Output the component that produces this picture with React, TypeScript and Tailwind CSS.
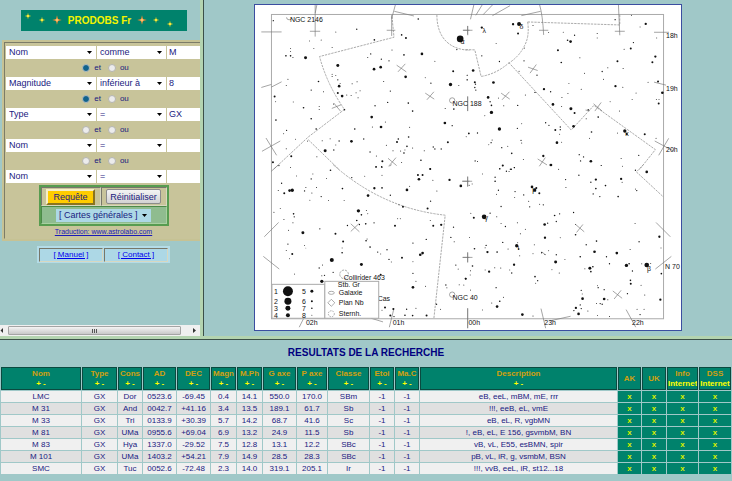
import type { ReactNode } from 'react';

type Star = [x: number, y: number, r: number];

interface Sheet {
  id: string;
  origin: string;
  stars: Star[];
  // solid tick marks and grid crosses
  marks: string;
  // dashed constellation borders
  borders: string;
}

// The sky map is plotted as four sheets, each at three units per pixel.
const sheets: Sheet[] = [
  {
    id: 'nw',
    origin: 'translate(-5 -5) scale(0.3333)',
    stars: [
      [70, 62, 2], [258, 96, 1.5], [321, 88, 2], [506, 57, 2.5], [456, 105, 2.5], [469, 114, 3], [179, 123, 1.5],
      [214, 120, 1.5], [374, 120, 2.5], [122, 146, 1.5], [122, 155, 1.5], [108, 168, 2.5], [122, 168, 2.5], [129, 173, 1.5],
      [167, 174, 4.5], [192, 146, 1.5], [247, 143, 1.5], [427, 150, 1.5], [363, 162, 2], [354, 173, 1.5], [395, 178, 2],
      [418, 183, 2], [463, 165, 2.5], [517, 162, 4], [556, 184, 1.5], [264, 197, 4.5], [393, 202, 4], [373, 208, 4],
      [611, 214, 3], [468, 231, 4], [527, 234, 1.5], [544, 250, 2], [603, 254, 5], [628, 257, 1.5], [653, 240, 2],
      [653, 226, 1.5], [247, 223, 1.5], [247, 230, 1.5], [258, 227, 1.5], [264, 240, 2], [271, 251, 1.5], [268, 259, 4],
      [206, 245, 2.5], [114, 238, 1.5], [109, 257, 1.5], [184, 271, 2], [221, 276, 1.5], [264, 280, 3], [277, 289, 4],
      [291, 286, 1.5], [304, 287, 1.5], [319, 279, 1.5], [325, 294, 1.5], [331, 273, 1.5], [322, 246, 1.5], [307, 252, 1.5],
      [402, 245, 1.5], [422, 274, 2], [74, 290, 3], [77, 306, 1.5], [130, 307, 1.5], [161, 324, 2.5], [208, 320, 1.5],
      [208, 329, 1.5], [251, 313, 1.5], [284, 330, 2.5], [414, 308, 2], [376, 318, 2], [476, 310, 2.5], [489, 334, 2.5],
      [587, 326, 1.5], [613, 328, 2.5], [78, 361, 2.5], [184, 357, 2.5], [366, 352, 4], [394, 382, 4], [368, 382, 1.5],
      [407, 367, 1.5], [480, 383, 1.5], [586, 370, 4], [608, 378, 2], [110, 392, 2], [101, 402, 1.5], [199, 388, 2.5],
      [315, 388, 2.5], [477, 412, 2.5], [658, 401, 2.5], [137, 419, 1.5], [217, 423, 1.5], [241, 417, 1.5], [268, 424, 2],
      [305, 425, 4], [342, 418, 2], [258, 436, 1.5], [226, 453, 4.5], [252, 451, 2], [201, 471, 1.5], [124, 470, 3],
      [109, 447, 1.5], [173, 424, 1.5], [446, 418, 2.5], [442, 427, 3], [410, 437, 1.5], [430, 453, 1.5], [453, 454, 1.5],
      [463, 460, 2.5], [472, 440, 2.5], [489, 445, 1.5], [466, 451, 1.5], [551, 442, 2], [556, 448, 2], [575, 448, 2],
      [595, 428, 3], [524, 453, 1.5], [514, 482, 2.5], [542, 508, 3], [361, 457, 2], [380, 469, 1.5], [398, 485, 3],
      [456, 489, 1.5], [379, 502, 2.5], [396, 502, 2.5], [69, 488, 3], [122, 504, 1.5], [632, 117, 10], [622, 149, 2],
    ],
    marks:
      'M34 96H95M64 262L95 246M34 263L64 254M196 15V110M180 94H211M426 45V108M411 91H437M437 15L426 56M434 34L493 48M441 196L470 216M467 192L445 216M527 280L554 298M553 276L532 300M252 310L272 334M246 326L274 315M36 455L91 424M48 415L80 467M415 476L441 498M439 474L417 500M655 78V106M640 91H660M655 290V334M196 40L201 15M600 302A8 8 0 1 0 616 302A8 8 0 1 0 600 302M110 52A8 7 0 0 0 126 53',
    borders: 'M427 50L433 112L209 170Q232 255 284 329L175 412L70 510M175 420L268 510M562 45C562 110 597 149 660 151',
  },
  {
    id: 'ne',
    origin: 'translate(210 -5) scale(0.3333)',
    stars: [
      [146, 73, 3.5], [164, 72, 6], [161, 101, 3], [52, 83, 3.5], [206, 77, 1.5], [453, 59, 2], [502, 46, 1.5],
      [545, 72, 3.5], [528, 81, 1.5], [399, 101, 1.5], [399, 114, 1.5], [331, 106, 2], [297, 97, 1.5], [310, 121, 2.5],
      [319, 125, 4], [253, 98, 1.5], [95, 131, 1.5], [281, 151, 3], [180, 144, 1.5], [480, 148, 1.5], [500, 146, 3],
      [508, 128, 2], [578, 114, 1.5], [574, 170, 3.5], [565, 187, 3], [460, 184, 3], [347, 174, 1.5], [291, 188, 2.5],
      [179, 183, 2], [52, 168, 2], [105, 185, 2], [26, 212, 4], [8, 226, 1.5], [8, 240, 1.5], [31, 247, 3],
      [33, 253, 2], [31, 263, 2], [34, 271, 2], [87, 248, 4], [218, 226, 2], [361, 220, 1.5], [431, 204, 1.5],
      [414, 215, 2], [418, 238, 1.5], [477, 206, 1.5], [314, 251, 1.5], [351, 268, 1.5], [454, 259, 3.5], [476, 262, 1.5],
      [516, 280, 1.5], [552, 247, 1.5], [582, 245, 3], [595, 279, 4], [577, 299, 1.5], [585, 299, 1.5], [584, 311, 3],
      [504, 299, 1.5], [239, 268, 3.5], [259, 276, 2], [212, 278, 2], [183, 286, 1.5], [102, 295, 1.5], [71, 293, 4],
      [77, 306, 2], [81, 317, 2.5], [118, 318, 1.5], [160, 317, 2], [266, 314, 4], [293, 293, 1.5], [311, 281, 1.5],
      [292, 320, 1.5], [320, 327, 4.5], [331, 340, 3], [372, 330, 2], [438, 306, 1.5], [402, 352, 2.5], [466, 334, 1.5],
      [81, 338, 5], [61, 348, 1.5], [105, 388, 5], [159, 386, 2], [172, 372, 1.5], [244, 369, 2], [254, 377, 2],
      [273, 391, 3], [288, 382, 2], [288, 390, 2], [286, 404, 1.5], [328, 380, 4], [366, 357, 1.5], [382, 397, 2.5],
      [482, 394, 5], [488, 403, 3], [460, 400, 1.5], [542, 404, 3], [576, 416, 1.5], [5, 411, 1.5], [13, 402, 2],
      [39, 400, 2], [83, 421, 1.5], [80, 429, 2], [73, 435, 1.5], [112, 444, 2], [130, 440, 1.5], [170, 422, 2],
      [172, 430, 1.5], [278, 429, 4], [292, 428, 1.5], [376, 416, 1.5], [142, 461, 2.5], [177, 480, 1.5], [237, 469, 3.5],
      [259, 496, 3], [345, 465, 2], [358, 472, 2], [349, 484, 2], [380, 485, 4], [411, 498, 1.5], [475, 500, 1.5],
      [524, 467, 2], [32, 484, 2], [39, 486, 1.5], [115, 498, 2], [106, 507, 2], [138, 509, 2], [150, 504, 2],
      [164, 214, 1.5], [471, 477, 1.5],
    ],
    marks:
      'M18 58L28 15M34 46L53 15M56 44L84 15M84 47L137 17M171 47L229 34M226 15Q235 45 238 105M224 91H252M463 15L467 106M452 94H482M9 78V104M-4 91H24M191 202L220 212M216 194L197 220M110 280L136 298M135 276L113 300M388 312L414 334M411 308L392 334M572 424L628 454M614 416L584 467M570 247L606 256M570 97H615M220 478L248 496M243 474L225 500M364 331L377 333M9 290V334',
    borders:
      'M190 66L467 75V44M190 66Q196 110 180 138Q165 170 130 192Q95 222 50 230L31 150L0 149M133 188L321 391L389 317L574 450L526 510',
  },
  {
    id: 'sw',
    origin: 'translate(-5 160) scale(0.3333)',
    stars: [
      [87, 3, 2], [379, 7, 2], [397, 8, 1.5], [140, 34, 1.5], [189, 28, 1.5], [184, 43, 2], [230, 42, 1.5], [242, 17, 2.5],
      [306, 39, 2], [345, 35, 1.5], [397, 32, 1.5], [505, 31, 3], [519, 31, 3], [508, 44, 4], [542, 13, 2.5],
      [600, 46, 3.5], [634, 64, 4], [550, 47, 1.5], [562, 79, 1.5], [95, 56, 2], [85, 78, 1.5], [103, 86, 3],
      [119, 78, 4], [127, 77, 5], [168, 69, 1.5], [200, 69, 1.5], [164, 79, 2], [186, 85, 1.5], [214, 96, 2],
      [278, 72, 2.5], [374, 71, 3.5], [397, 70, 2.5], [355, 93, 4], [472, 76, 4], [480, 65, 1.5], [422, 92, 2],
      [180, 107, 1.5], [283, 108, 1.5], [236, 108, 1.5], [448, 121, 1.5], [460, 127, 3], [534, 132, 3], [543, 110, 2],
      [72, 143, 1.5], [91, 132, 1.5], [131, 148, 2.5], [133, 157, 2], [102, 165, 1.5], [326, 139, 5], [335, 151, 2.5],
      [354, 148, 1.5], [350, 138, 1.5], [321, 168, 2.5], [444, 163, 1.5], [452, 163, 1.5], [436, 184, 3], [542, 168, 1.5],
      [551, 184, 3], [575, 181, 3.5], [612, 188, 2], [129, 175, 1.5], [210, 193, 2], [159, 205, 4.5], [116, 197, 1.5],
      [257, 208, 3], [293, 183, 2], [329, 180, 2], [348, 178, 2.5], [373, 175, 2], [280, 231, 3], [352, 224, 1.5],
      [349, 229, 2.5], [361, 248, 2.5], [412, 256, 2], [384, 263, 2], [393, 269, 1.5], [418, 285, 2], [425, 293, 1.5],
      [490, 236, 2], [530, 225, 2], [604, 219, 2], [614, 232, 1.5], [114, 239, 2], [109, 258, 1.5], [127, 269, 3],
      [119, 283, 1.5], [164, 243, 1.5], [168, 251, 1], [277, 251, 1.5], [277, 265, 2.5], [246, 287, 6], [335, 300, 4.5],
      [457, 280, 3], [519, 266, 4], [512, 271, 4], [490, 292, 1.5], [218, 302, 1.5], [208, 311, 2], [134, 329, 1.5],
      [216, 334, 1.5], [224, 333, 2], [216, 351, 5], [250, 324, 2], [333, 331, 1.5], [393, 331, 3], [490, 327, 2],
      [499, 351, 1.5], [490, 369, 4], [528, 366, 1.5], [589, 362, 2], [592, 370, 1.5], [619, 302, 2], [626, 314, 1.5],
      [648, 343, 2.5], [629, 361, 1.5], [643, 362, 1.5], [561, 420, 2], [573, 435, 1.5], [406, 430, 3], [397, 438, 1.5],
      [431, 434, 3], [422, 454, 3], [433, 457, 2], [466, 453, 2.5], [489, 454, 2.5], [531, 454, 3], [471, 435, 2],
      [499, 432, 1.5],
    ],
    marks:
      'M43 217L86 174M40 276L88 314M64 20L86 0M303 178L329 202M327 178L303 201M655 36V66M638 50H660M655 264V294M640 279H660M148 489L161 463M364 462L400 473M419 489L433 432M655 432V492M600 391A8 8 0 1 0 616 391A8 8 0 1 0 600 391M420 5L426 0',
    borders: 'M250 0Q398 132 587 152L553 462M270 330A13 13 0 1 0 296 330A13 13 0 1 0 270 330',
  },
  {
    id: 'se',
    origin: 'translate(210 160) scale(0.3333)',
    stars: [
      [106, 13, 2], [115, 3, 3], [126, 20, 2], [134, 21, 1.5], [141, 14, 2], [150, 9, 2], [260, 1, 4], [283, 14, 1.5],
      [304, 45, 2], [305, 69, 1.5], [344, 32, 2], [411, 3, 1.5], [514, 17, 2], [548, 22, 4], [471, 43, 3.5], [474, 53, 1.5],
      [395, 45, 3.5], [380, 53, 2], [424, 63, 2.5], [395, 72, 2.5], [387, 88, 2], [407, 96, 2], [462, 96, 2.5],
      [514, 73, 1.5], [518, 78, 2], [92, 38, 2], [92, 50, 2.5], [54, 28, 1.5], [14, 62, 1.5], [23, 58, 1.5],
      [102, 77, 2], [96, 89, 1.5], [152, 81, 2], [151, 99, 1.5], [178, 91, 2], [203, 67, 4], [211, 76, 5], [216, 70, 3],
      [225, 86, 3], [193, 110, 1.5], [196, 127, 2], [226, 119, 1.5], [237, 121, 2], [110, 126, 2], [77, 146, 2],
      [19, 146, 1.5], [28, 160, 3], [59, 157, 7], [97, 157, 1.5], [110, 177, 1.5], [123, 186, 2], [159, 175, 1.5],
      [183, 194, 1.5], [168, 208, 1.5], [241, 180, 4], [250, 176, 2], [271, 153, 2.5], [286, 148, 2], [276, 171, 2],
      [328, 144, 2], [334, 180, 1.5], [513, 177, 1.5], [586, 217, 3.5], [525, 232, 2], [334, 211, 2.5], [242, 220, 3.5],
      [288, 220, 1.5], [366, 241, 2], [397, 230, 2.5], [391, 262, 4], [458, 266, 4], [498, 255, 1.5], [591, 251, 1.5],
      [15, 219, 1.5], [30, 253, 2.5], [65, 243, 2], [62, 250, 1.5], [69, 263, 3.5], [98, 263, 2.5], [115, 234, 2],
      [131, 254, 1.5], [157, 244, 5], [163, 254, 2.5], [160, 235, 1.5], [166, 274, 1.5], [210, 241, 1.5], [206, 268, 1.5],
      [232, 265, 2], [242, 270, 1.5], [253, 259, 1.5], [276, 271, 2], [274, 293, 4.5], [263, 316, 1.5], [285, 326, 1.5],
      [302, 285, 1.5], [348, 277, 2.5], [362, 313, 1.5], [377, 312, 4.5], [386, 307, 2.5], [380, 322, 2.5], [427, 277, 2],
      [436, 298, 2], [487, 303, 5], [495, 298, 2.5], [533, 298, 1.5], [548, 302, 7], [560, 297, 1.5], [505, 320, 2],
      [592, 328, 2.5], [149, 301, 3.5], [142, 326, 2], [136, 317, 1.5], [91, 310, 1.5], [109, 311, 1.5], [74, 322, 3.5],
      [62, 317, 1.5], [24, 305, 2.5], [18, 319, 1.5], [17, 332, 1.5], [4, 343, 3], [212, 337, 2.5], [220, 349, 2],
      [214, 357, 1.5], [95, 370, 2], [18, 377, 1.5], [117, 399, 1.5], [106, 411, 2.5], [82, 416, 1.5], [98, 427, 4],
      [54, 437, 1.5], [174, 451, 4], [206, 455, 1.5], [351, 378, 2], [354, 389, 1.5], [355, 403, 4], [348, 422, 2],
      [335, 431, 3.5], [351, 433, 2], [329, 439, 2], [343, 449, 4], [371, 440, 1.5], [400, 454, 1.5], [436, 457, 1.5],
      [400, 364, 1.5], [402, 370, 2], [420, 376, 2], [420, 404, 4], [431, 406, 1.5], [397, 418, 1.5], [408, 418, 2],
      [414, 420, 2], [499, 348, 2.5], [500, 358, 3], [531, 363, 1.5], [490, 388, 2], [542, 392, 1.5], [589, 406, 3.5],
      [519, 435, 1.5], [540, 435, 1.5], [528, 451, 2],
    ],
    marks:
      'M9 36V66M-6 50H23M9 264V294M-6 279H24M334 180L360 202M356 180L337 204M446 380L474 402M471 378L450 404M576 174L619 217M574 314L622 276M9 432V492M230 433L244 492M486 436L515 489M256 470L319 456M232 262L243 271',
    borders: 'M538 0L517 22L598 97',
  },
];

const chartLabels: [x: number, y: number, text: string][] = [
  [35, 17, 'NGC 2146'], [198, 101, 'NGC 188'], [198, 296, 'NGC 40'], [89, 276, 'Collinder 463'], [123, 297, 'Cas'],
  [412, 33, '18h'], [412, 86, '19h'], [412, 147, '20h'], [411, 265, 'N 70'],
  [51, 321, '02h'], [138, 321, '01h'], [214, 321, '00h'], [290, 321, '23h'], [378, 321, '22h'],
  [206, 39, 'α'], [265, 24, 'δ'], [228, 28, 'λ'], [371, 131, 'κ'], [230, 216, 'γ'], [278, 187, 'μ'], [393, 267, 'β'], [263, 246, 'ι'],
];

const magnitudes: [cx: number, cy: number, r: number, label: string, tx: number][] = [
  [33, 287, 5, '1', 19], [33, 297, 3.5, '2', 19], [33, 304, 2.5, '3', 19], [33, 311, 2, '4', 19],
  [57, 287, 1.5, '5', 47], [57, 297, 1, '6', 47], [57, 304, 0.8, '7', 47], [57, 311, 0.5, '8', 47],
];

function StarChart() {
  return (
    <svg viewBox="0 0 427 326" className="block w-full max-w-[428px] border border-[#3b4ea0] bg-white" role="img" aria-label="Carte du ciel">
      <rect x="16.5" y="9.5" width="393" height="305" fill="none" stroke="#aaa" />
      {sheets.map((sheet) => (
        <g key={sheet.id} transform={sheet.origin}>
          <path d={sheet.borders} fill="none" stroke="#999" strokeWidth="2.5" strokeDasharray="7 3" />
          <path d={sheet.marks} fill="none" stroke="#777" strokeWidth="2" />
          {sheet.stars.map(([x, y, r], i) => (
            <circle key={i} cx={x} cy={y} r={r} fill="#111" />
          ))}
        </g>
      ))}
      <g fontFamily="'Liberation Sans', sans-serif" fontSize="7" fill="#111">
        {chartLabels.map(([x, y, text]) => (
          <text key={text} x={x} y={y}>{text}</text>
        ))}
        <rect x="17" y="280" width="53" height="34" fill="#fff" stroke="#aaa" />
        <rect x="70" y="277" width="54" height="37" fill="#fff" stroke="#aaa" />
        {magnitudes.map(([cx, cy, r, label, tx]) => (
          <g key={label}>
            <text x={tx} y={cy + 3}>{label}</text>
            <circle cx={cx} cy={cy} r={r} />
          </g>
        ))}
        <g fill="none" stroke="#888" strokeWidth="0.7">
          <ellipse cx="76.5" cy="288.5" rx="3" ry="1.5" />
          <path d="M76.5 295L80 298.5L76.5 302L73 298.5Z" />
          <circle cx="76.5" cy="309.5" r="3" strokeDasharray="1.5 1" />
        </g>
        <text x="83" y="283">Stb. Gr</text>
        <text x="84" y="291">Galaxie</text>
        <text x="84" y="301">Plan Nb</text>
        <text x="84" y="312">Sternh.</text>
      </g>
    </svg>
  );
}

const SPARK = 'M0 -4L0.8 -0.8L4 0L0.8 0.8L0 4L-0.8 0.8L-4 0L-0.8 -0.8Z';

function Sparks({ mirrored = false }: { mirrored?: boolean }) {
  const spots = mirrored
    ? [[5, 10, true], [19, 10, false], [33, 14, false]]
    : [[4, 6, false], [18, 10, false], [33, 10, true]];

  return (
    <svg width="38" height="21" viewBox="0 0 38 21" aria-hidden="true">
      {(spots as [number, number, boolean][]).map(([x, y, big]) => (
        <g key={x} transform={`translate(${x} ${y})`}>
          <path d={SPARK} transform={big ? 'scale(1.2)' : 'scale(0.8)'} fill={big ? '#ee8a30' : '#f4d820'} />
          <circle r={big ? 1.5 : 1} fill={big ? '#ffc070' : '#fff04a'} />
        </g>
      ))}
    </svg>
  );
}

function Dropdown({ label, value, className }: { label: string; value: string; className: string }) {
  return (
    <div className={`relative h-[13px] ${className}`}>
      <select aria-label={label} defaultValue={value} className="block h-full w-full appearance-none bg-transparent px-[3px] text-[9px] leading-[13px] outline-none">
        <option>{value}</option>
      </select>
      <svg width="5" height="3" viewBox="0 0 5 3" className="pointer-events-none absolute top-[5px] right-[4px]" aria-hidden="true">
        <path d="M0 0H5L2.5 3Z" fill="#000" />
      </svg>
    </div>
  );
}

interface Criterion {
  field: string;
  operator: string;
  value: string;
  // how the criterion joins the next one
  join?: 'et' | 'none';
}

const criteria: Criterion[] = [
  { field: 'Nom', operator: 'comme', value: 'M', join: 'et' },
  { field: 'Magnitude', operator: 'inférieur à', value: '8', join: 'et' },
  { field: 'Type', operator: '=', value: 'GX', join: 'none' },
  { field: 'Nom', operator: '=', value: '', join: 'none' },
  { field: 'Nom', operator: '=', value: '' },
];

function Radio({ name, label, checked = false }: { name: string; label: string; checked?: boolean }) {
  return (
    <label className="flex items-center gap-1">
      <input
        type="radio"
        name={name}
        value={label}
        defaultChecked={checked}
        className="size-[8px] appearance-none rounded-full border border-[#b4b4b0] bg-[#ececec] checked:border-[#b0bcc4] checked:bg-[#10628c]"
      />
      {label}
    </label>
  );
}

function Cell({ children }: { children: ReactNode }) {
  return (
    <div className="flex items-center justify-center border border-t-[#77776a] border-r-[#d8d8c0] border-b-[#d8d8c0] border-l-[#77776a]">
      {children}
    </div>
  );
}

function SearchForm() {
  return (
    <form className="w-[203px] border-2 border-[#c6c294] bg-[#c8c49a]" onSubmit={(event) => event.preventDefault()}>
      <div className="border border-t-[#7c7c68] border-l-[#7c7c68] border-r-[#d8d8b8] border-b-[#c8c49a] px-px pt-[3px]">
        {criteria.map((criterion, i) => (
          <div key={i}>
            <div className="flex gap-px">
              <Dropdown label={`Champ ${i + 1}`} value={criterion.field} className="w-[90px] bg-white" />
              <Dropdown label={`Opérateur ${i + 1}`} value={criterion.operator} className="w-[69px] bg-white" />
              <input
                aria-label={`Valeur ${i + 1}`}
                defaultValue={criterion.value}
                className="block h-[13px] min-w-0 flex-1 bg-white px-[2px] text-[9px] leading-[13px] outline-none"
              />
            </div>
            {criterion.join && (
              <div className="flex h-[18px] items-center justify-center gap-[7px] pl-1 text-[8px] leading-none">
                <Radio name={`join-${i}`} label="et" checked={criterion.join === 'et'} />
                <Radio name={`join-${i}`} label="ou" />
              </div>
            )}
          </div>
        ))}

        <div className="mx-auto mt-[2px] w-[130px] border-2 border-[#579c50]">
          <div className="grid h-[19px] grid-cols-[60px_66px]">
            <Cell>
              <button type="submit" className="h-[16px] w-[49px] border-2 border-t-[#f6efc8] border-r-[#8a7420] border-b-[#8a7420] border-l-[#f6efc8] bg-[#ffcc00] text-[9px] leading-[12px]">
                Requête
              </button>
            </Cell>
            <Cell>
              <button type="reset" className="h-[15px] w-[55px] rounded-[2px] border border-[#8c8c8c] bg-linear-to-b from-[#f4f4f4] to-[#d2d2d2] text-[9px] leading-[12px]">
                Réinitialiser
              </button>
            </Cell>
          </div>
          <div className="flex h-[18px] items-center justify-center border border-t-[#4c8a48] bg-[#8fbc8f] border-r-[#a8d0a0] border-b-[#a8d0a0] border-l-[#4c8a48]">
            <Dropdown label="Cartes" value="[ Cartes générales ]" className="w-[95px] bg-[#add8e6]" />
          </div>
        </div>
        <p className="h-[12px] text-center text-[7px] leading-[12px]">
          <a href="#traduction" className="text-[#1a1ab8] underline">Traduction: www.astrolabo.com</a>
        </p>
      </div>
    </form>
  );
}

const navLinks = ['[ Manuel ]', '[ Contact ]'];

function ScrollBar() {
  return (
    <div className="flex h-[11px] w-[200px] items-center bg-[#f0f0f0]" aria-hidden="true">
      <svg width="8" height="11" viewBox="0 0 8 11"><path d="M3 3V8L0.5 5.5Z" fill="#333" /></svg>
      <div className="flex h-[9px] w-[173px] items-center justify-center gap-px rounded-[1px] border border-[#a4a4a4] bg-linear-to-b from-[#f4f4f4] to-[#c8c8c8]">
        <span className="h-1 w-px bg-[#555]" />
        <span className="h-1 w-px bg-[#555]" />
        <span className="h-1 w-px bg-[#555]" />
      </div>
      <svg width="19" height="11" viewBox="0 0 19 11"><path d="M12 3V8L15 5.5Z" fill="#333" /></svg>
    </div>
  );
}

const columns: { title: string; width: string; sub?: string }[] = [
  { title: 'Nom', width: 'w-[80px]', sub: '+ -' },
  { title: 'Type', width: 'w-[35px]', sub: '+ -' },
  { title: 'Cons', width: 'w-[24px]', sub: '+ -' },
  { title: 'AD', width: 'w-[33px]', sub: '+ -' },
  { title: 'DEC', width: 'w-[33px]', sub: '+ -' },
  { title: 'Magn', width: 'w-[25px]', sub: '+ -' },
  { title: 'M.Ph', width: 'w-[25px]', sub: '+ -' },
  { title: 'G axe', width: 'w-[33px]', sub: '+ -' },
  { title: 'P axe', width: 'w-[30px]', sub: '+ -' },
  { title: 'Classe', width: 'w-[41px]', sub: '+ -' },
  { title: 'Etoi', width: 'w-[24px]', sub: '+ -' },
  { title: 'Ma.C', width: 'w-[24px]', sub: '+ -' },
  { title: 'Description', width: '', sub: '+ -' },
  { title: 'AK', width: 'w-[23px]' },
  { title: 'UK', width: 'w-[24px]' },
  { title: 'Info', width: 'w-[31px]', sub: 'Internet' },
  { title: 'DSS', width: 'w-[32px]', sub: 'Internet' },
];

const objects = [
  ['LMC', 'GX', 'Dor', '0523.6', '-69.45', '0.4', '14.1', '550.0', '170.0', 'SBm', '-1', '-1', 'eB, eeL, mBM, mE, rrr'],
  ['M 31', 'GX', 'And', '0042.7', '+41.16', '3.4', '13.5', '189.1', '61.7', 'Sb', '-1', '-1', '!!!, eeB, eL, vmE'],
  ['M 33', 'GX', 'Tri', '0133.9', '+30.39', '5.7', '14.2', '68.7', '41.6', 'Sc', '-1', '-1', 'eB, eL, R, vgbMN'],
  ['M 81', 'GX', 'UMa', '0955.6', '+69.04', '6.9', '13.2', '24.9', '11.5', 'Sb', '-1', '-1', '!, eB, eL, E 156, gsvmbM, BN'],
  ['M 83', 'GX', 'Hya', '1337.0', '-29.52', '7.5', '12.8', '13.1', '12.2', 'SBc', '-1', '-1', 'vB, vL, E55, esBMN, spir'],
  ['M 101', 'GX', 'UMa', '1403.2', '+54.21', '7.9', '14.9', '28.5', '28.3', 'SBc', '-1', '-1', 'pB, vL, iR, g, vsmbM, BSN'],
  ['SMC', 'GX', 'Tuc', '0052.6', '-72.48', '2.3', '14.0', '319.1', '205.1', 'Ir', '-1', '-1', '!!!, vvB, eeL, iR, st12...18'],
];

const lookups = ['AK', 'UK', 'Info', 'DSS'];

function Results() {
  return (
    <section className="pb-1">
      <h2 className="h-[26px] text-center text-[10px] leading-[26px] font-bold text-[#000080]">RESULTATS DE LA RECHERCHE</h2>
      <table className="w-full table-fixed border-separate border-spacing-px text-center text-[8px]">
        <colgroup>
          {columns.map((column) => (
            <col key={column.title} className={column.width} />
          ))}
        </colgroup>
        <thead>
          <tr className="h-[23px]">
            {columns.map((column) => (
              <th key={column.title} className="overflow-hidden border border-[#0a4a40] bg-[#00826c] p-0 leading-[10px] font-bold whitespace-nowrap text-[#d0a010]">
                {column.title}
                {column.sub && <span className="block text-[#ffff00]">{column.sub}</span>}
              </th>
            ))}
          </tr>
        </thead>
        <tbody>
          {objects.map((row) => (
            <tr key={row[0]} className="h-[11px] bg-[#f0f0f0] even:bg-[#e0e0e0]">
              {row.map((value, i) => (
                <td key={i} className="p-0 leading-[11px] whitespace-nowrap">{value}</td>
              ))}
              {lookups.map((name) => (
                <td key={name} className="bg-[#00826c] p-0 leading-[11px] font-bold">
                  <a href={`#${name}`} className="text-[#d8f000]">x</a>
                </td>
              ))}
            </tr>
          ))}
        </tbody>
      </table>
    </section>
  );
}

export default function App() {
  return (
    <div className="min-h-screen bg-[#a0c8c8] font-['Liberation_Sans',Arial,sans-serif] text-[#191980]">
      <div className="flex">
        <aside className="flex w-[204px] shrink-0 flex-col overflow-hidden border-r border-[#3c5048]">
          <div className="flex flex-1 overflow-hidden border-r-[3px] border-[#b4d4b0]">
            <div className="flex w-[200px] flex-col">
              <div className="flex w-[207px] flex-1 flex-col items-center pt-[10px]">
                <h1 className="flex h-[21px] w-[166px] items-center justify-center bg-[#00826c] pr-2 text-[10px] font-bold whitespace-nowrap text-[#f4f400]">
                  <Sparks />
                  <span className="px-1.5">PRODOBS Fr</span>
                  <Sparks mirrored />
                </h1>
                <div className="pt-[9px]">
                  <SearchForm />
                </div>
                <nav className="mt-[5px] grid h-[17px] w-[133px] grid-cols-2 gap-px border-2 border-[#b4dce8] bg-[#add8e6] text-[8px]">
                  {navLinks.map((link) => (
                    <Cell key={link}>
                      <a href="#nav" className="text-[#0000ee] underline">{link}</a>
                    </Cell>
                  ))}
                </nav>
              </div>
              <ScrollBar />
            </div>
          </div>
        </aside>
        <main className="flex min-w-0 flex-1 items-start justify-center px-2 pt-[4px] pb-[5px]">
          <StarChart />
        </main>
      </div>
      <div className="h-[4px] border-b border-[#3c5048] bg-[#b4d4b0]" />
      <Results />
    </div>
  );
}
